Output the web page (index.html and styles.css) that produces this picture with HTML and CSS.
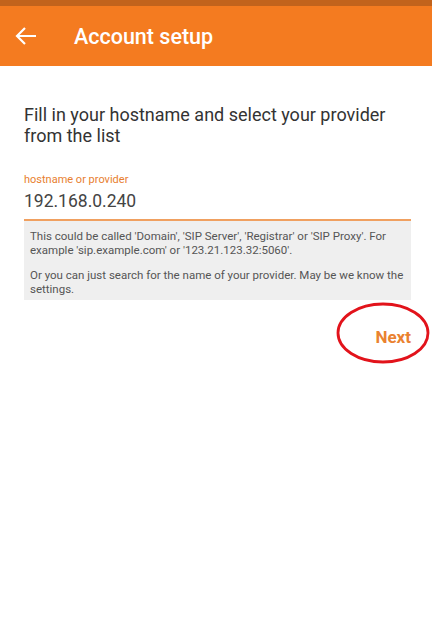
FILE: index.html
```html
<!DOCTYPE html>
<html lang="en">
  <head>
    <meta charset="UTF-8" />
    <title>Account setup</title>
    <link rel="stylesheet" href="styles.css">
  </head>
  <body>
    <div class="status-bar"></div>
    <div class="app-bar">
      <svg class="back" width="24" height="24" viewBox="0 0 24 24">
        <path d="M22 12H3M11 4L3 12L11 20" fill="none" stroke="#fff" stroke-width="2.2" />
      </svg>
      <span class="title">Account setup</span>
    </div>

    <div class="content">
      <h1>Fill in your hostname and select your provider from the list</h1>

      <div class="field">
        <label for="host">hostname or provider</label>
        <input id="host" type="text" value="192.168.0.240" />
      </div>

      <div class="hint">
        <p>This could be called 'Domain', 'SIP Server', 'Registrar' or 'SIP Proxy'. For example 'sip.example.com' or '123.21.123.32:5060'.</p>
        <p>Or you can just search for the name of your provider. May be we know the settings.</p>
      </div>

      <div class="actions">
        <button class="next">Next</button>
        <svg class="circle" width="96" height="64" viewBox="0 0 96 64">
          <ellipse cx="48" cy="32" rx="45" ry="29" fill="none" stroke="#e2131b" stroke-width="2.8" />
        </svg>
      </div>
    </div>
  </body>
</html>
```

FILE: styles.css
```css
body {
  margin: 0;
  font-family: Roboto, "Noto Sans", sans-serif;
  background: #fff;
  width: 432px;
  height: 640px;
}

.status-bar {
  height: 6px;
  background: #c2631c;
}

.app-bar {
  height: 60px;
  background: #f47b20;
  display: flex;
  align-items: center;
  padding-left: 14px;
  color: #fff;
}

.app-bar .title {
  margin-left: 36px;
  font-size: 21.5px;
  font-weight: 500;
}

.content {
  padding: 38px 21px 0 24px;
}

h1 {
  margin: 0 0 27px;
  font-size: 18px;
  font-weight: 400;
  line-height: 21px;
  color: #333;
}

.field label {
  display: block;
  font-size: 11px;
  color: #e8802f;
  line-height: 14px;
}

.field input {
  display: block;
  width: 100%;
  box-sizing: border-box;
  border: none;
  border-bottom: 2px solid #f0a060;
  padding: 4px 0 8px;
  font-family: inherit;
  font-size: 17.5px;
  color: #444;
  outline: none;
}

.hint {
  background: #efefef;
  padding: 8px 6px 4px;
  font-size: 11.5px;
  line-height: 14px;
  color: #555;
}

.hint p {
  margin: 0 0 11px;
}

.hint p:last-child {
  margin-bottom: 0;
}

.actions {
  position: relative;
  display: flex;
  justify-content: flex-end;
  margin-top: 27px;
}

.next {
  border: none;
  background: none;
  padding: 0;
  font-family: inherit;
  font-size: 17px;
  font-weight: 700;
  color: #ea8230;
}

.circle {
  position: absolute;
  right: -20px;
  top: -26px;
}
```
